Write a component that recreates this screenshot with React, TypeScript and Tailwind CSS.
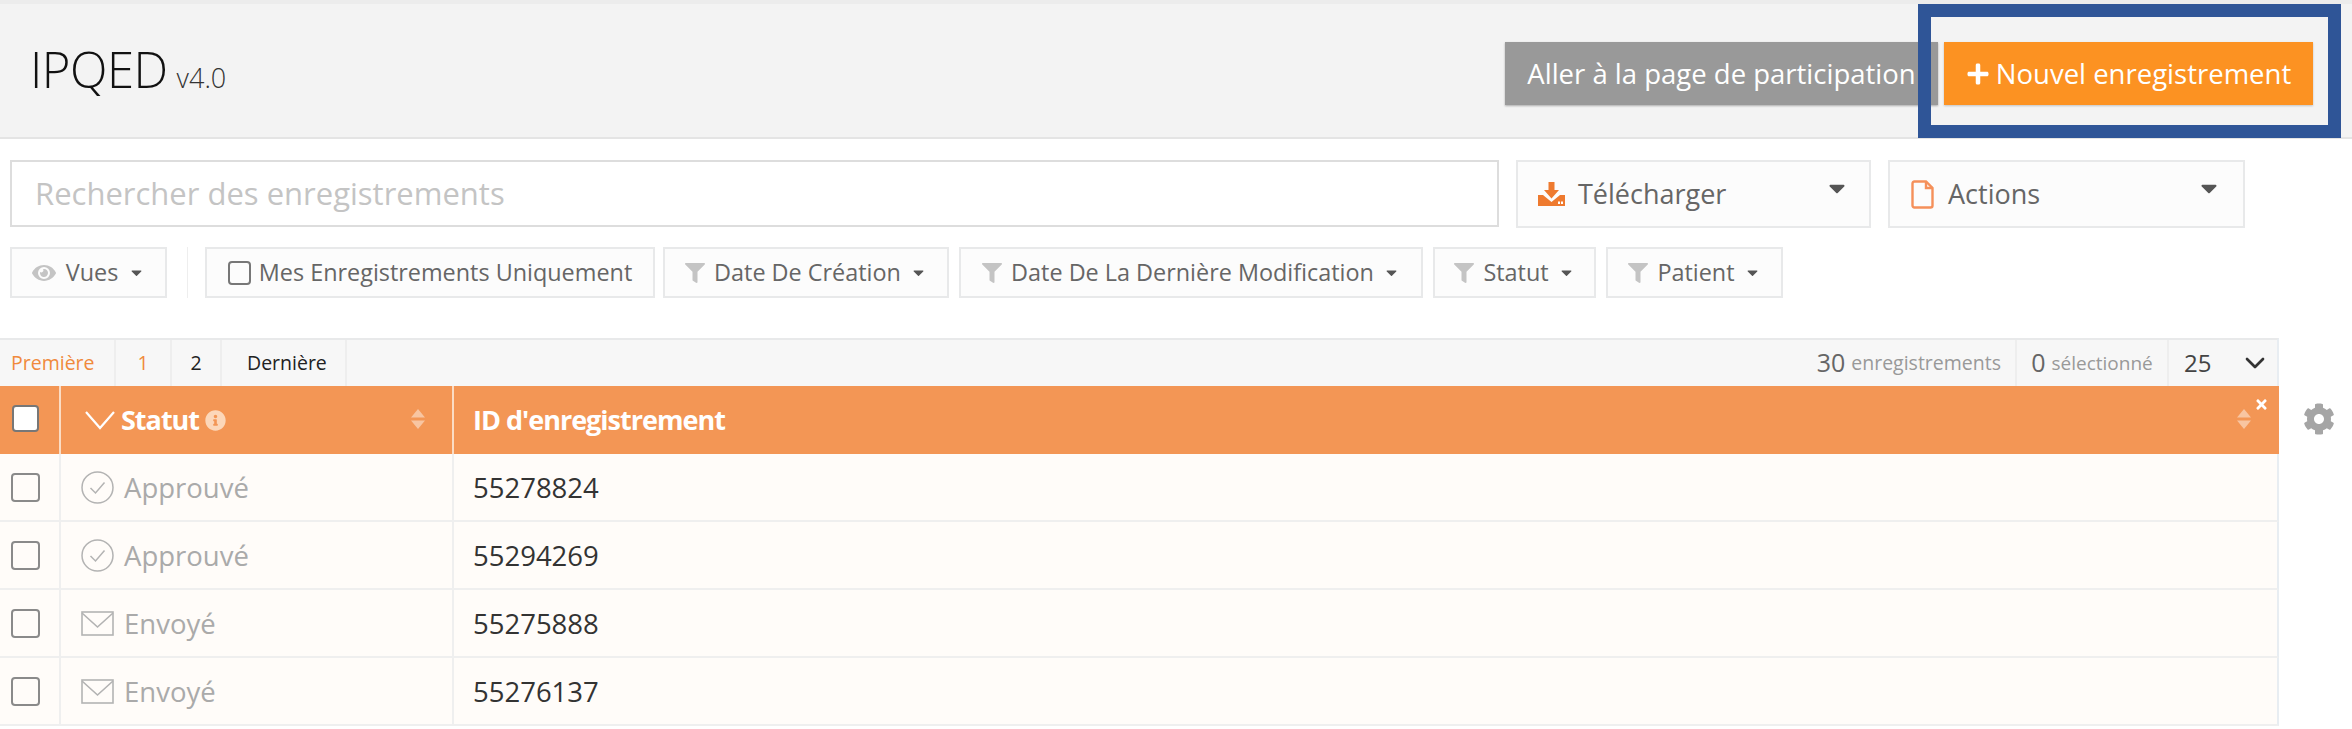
import React from "react";
import { FaEye, FaFilter, FaPlus, FaCog, FaCaretDown, FaInfoCircle, FaTimes } from "react-icons/fa";
import { ChevronDown } from "lucide-react";

function Sort({ className = "" }: { className?: string }) {
  return (
    <svg width="16" height="20" viewBox="0 0 16 20" className={className}>
      <path d="M8 0 L15 8.5 H1 Z" fill="#fff" fillOpacity="0.45" />
      <path d="M8 20 L15 11.5 H1 Z" fill="#fff" fillOpacity="0.45" />
    </svg>
  );
}

function Check() {
  return (
    <svg width="33" height="33" viewBox="0 0 33 33" fill="none" stroke="#b3b3b3" strokeWidth="1.5">
      <circle cx="16.5" cy="16.5" r="15.5" />
      <path d="M9.5 17 L14.5 22 L23.5 11.5" />
    </svg>
  );
}

function Mail() {
  return (
    <svg width="33" height="25" viewBox="0 0 33 25" fill="none" stroke="#b3b3b3" strokeWidth="1.6">
      <rect x="1" y="1" width="31" height="23" />
      <path d="M1 2 L16.5 16 L32 2" />
    </svg>
  );
}

function Filter({ w, label }: { w: string; label: string }) {
  return (
    <div className={`${w} h-[51px] flex items-center justify-center gap-[9px] bg-[#fcfcfc] border-2 border-[#e8e9ea] text-[23.4px] text-[#666]`}>
      <FaFilter className="text-[#c4c4c4] text-[20px]" />
      <span>{label}</span>
      <FaCaretDown className="text-[#555] text-[17px]" />
    </div>
  );
}

const rows = [
  { s: "Approuvé", id: "55278824", icon: <Check /> },
  { s: "Approuvé", id: "55294269", icon: <Check /> },
  { s: "Envoyé", id: "55275888", icon: <Mail /> },
  { s: "Envoyé", id: "55276137", icon: <Mail /> },
];

export default function App() {
  return (
    <div className="relative w-[2352px] h-[729px] overflow-hidden bg-white font-['Open_Sans',sans-serif]">
      <header className="h-[139px] bg-[#f3f3f3] border-t-4 border-t-[#ececec] border-b-2 border-b-[#e4e4e4] flex justify-between pl-[30px] pr-[39px] pt-[38px]">
        <div className="flex items-baseline gap-[9px] text-[#111] h-[63px] mt-[-4px]">
          <span className="text-[49px] leading-[63px] font-light tracking-[-0.5px]">IPQED</span>
          <span className="text-[27px] text-[#333] font-light">v4.0</span>
        </div>
        <div className="flex gap-[6px] h-[63px]">
          <button className="w-[433px] bg-[#999] text-white text-[27.5px] shadow-[0_1px_2px_rgba(0,0,0,0.3)]">Aller à la page de participation</button>
          <button className="w-[369px] bg-[#fc9222] text-white text-[27.5px] flex items-center justify-center gap-[6px] shadow-[0_1px_2px_rgba(0,0,0,0.2)]">
            <FaPlus className="text-[24px]" />
            Nouvel enregistrement
          </button>
        </div>
      </header>

      <div className="absolute left-[1918px] top-[4px] w-[423px] h-[134px] border-[13px] border-[#2f5597]" />

      <div className="flex pl-[10px] pt-[21px] h-[68px] box-content">
        <div className="w-[1489px] h-[67px] border-2 border-[#ddd] flex items-center pl-[23px] text-[31px] text-[#c4c4c4]">
          Rechercher des enregistrements
        </div>
        <div className="ml-[17px] w-[355px] h-[68px] relative border-2 border-[#e8e9ea] bg-[#fcfcfc] flex items-center pl-[20px] gap-[13px] text-[27px] text-[#666]">
          <svg width="27" height="24" viewBox="0 0 27 24" fill="#ee7a2f">
            <path d="M10.5 0 H16.5 V8 H21 L13.5 16.5 L6 8 H10.5 Z" />
            <path d="M0 13 H5 L13.5 20 L22 13 H27 V24 H0 Z" />
            <rect x="20" y="19.5" width="2" height="2.5" fill="#fff" />
            <rect x="23" y="19.5" width="2" height="2.5" fill="#fff" />
          </svg>
          Télécharger
          <FaCaretDown className="absolute right-[19px] top-[13px] text-[#555] text-[26px]" />
        </div>
        <div className="ml-[17px] w-[357px] h-[68px] relative border-2 border-[#e8e9ea] bg-[#fcfcfc] flex items-center pl-[21px] gap-[14px] text-[27px] text-[#666]">
          <svg width="23" height="29" viewBox="0 0 23 29" fill="none" stroke="#f5905a" strokeWidth="2.4">
            <path d="M1.5 3.5 Q1.5 1.5 3.5 1.5 H15 L21.5 8 V25.5 Q21.5 27.5 19.5 27.5 H3.5 Q1.5 27.5 1.5 25.5 Z" />
            <path d="M15 1.5 V8 H21.5" />
          </svg>
          Actions
          <FaCaretDown className="absolute right-[21px] top-[13px] text-[#555] text-[26px]" />
        </div>
      </div>

      <div className="flex items-stretch h-[51px] pl-[10px] mt-[19px]">
        <div className="w-[157px] flex items-center justify-center gap-[10px] bg-[#fcfcfc] border-2 border-[#e8e9ea] text-[23.4px] text-[#666]">
          <FaEye className="text-[#c4c4c4] text-[24px]" />
          <span>Vues</span>
          <FaCaretDown className="text-[#555] text-[17px]" />
        </div>
        <div className="w-px bg-[#eee] ml-[20px] mr-[17px]" />
        <div className="w-[450px] flex items-center justify-center gap-[8px] bg-[#fcfcfc] border-2 border-[#e8e9ea] text-[23.4px] text-[#666]">
          <span className="w-[23px] h-[24px] border-2 border-[#777] rounded-[4px]" />
          <span>Mes Enregistrements Uniquement</span>
        </div>
        <div className="flex gap-[10px] ml-[8px]">
          <Filter w="w-[286px]" label="Date De Création" />
          <Filter w="w-[464px]" label="Date De La Dernière Modification" />
          <Filter w="w-[163px]" label="Statut" />
          <Filter w="w-[177px]" label="Patient" />
        </div>
      </div>

      <div className="flex mt-[40px]">
        <div className="w-[2279px]">
          <div className="h-[48px] bg-[#f7f7f7] border-t-2 border-t-[#e8e9ea] border-r-2 border-r-[#e8edf2] flex items-stretch text-[19.5px]">
            <div className="w-[116px] flex items-center pl-[11px] text-[#f08a3c] border-r-2 border-[#eee]">Première</div>
            <div className="w-[56px] flex items-center justify-center text-[#f08a3c] border-r-2 border-[#eee]">1</div>
            <div className="w-[50px] flex items-center justify-center text-[#222] border-r-2 border-[#eee]">2</div>
            <div className="w-[125px] flex items-center pl-[25px] text-[#222] border-r-2 border-[#eee]">Dernière</div>
            <div className="flex-1" />
            <div className="flex items-center gap-[6px] pr-[14px] border-r-2 border-[#eee] text-[#999] text-[19.5px]">
              <span className="text-[25px] text-[#666]">30</span> enregistrements
            </div>
            <div className="w-[152px] flex items-center justify-center gap-[6px] border-r-2 border-[#eee] text-[#999] text-[19px]">
              <span className="text-[25px] text-[#666]">0</span> sélectionné
            </div>
            <div className="w-[108px] flex items-center justify-between pl-[15px] pr-[6px] text-[24px] text-[#444]">
              25
              <ChevronDown size={32} strokeWidth={2} className="text-[#333]" />
            </div>
          </div>

          <div className="h-[68px] bg-[#f39655] flex items-stretch text-white text-[27px] font-bold">
            <div className="w-[61px] flex items-center pl-[12px] border-r-2 border-[#fbdcc4]">
              <span className="w-[27px] h-[27px] bg-white rounded-[4px] border-2 border-[#777] mt-[-4px]" />
            </div>
            <div className="w-[393px] relative flex items-center pl-[24px] gap-[6px] border-r-2 border-[#fbdcc4]">
              <svg width="30" height="20" viewBox="0 0 30 20" fill="none" stroke="#fff" strokeWidth="2.2"><path d="M1 2 L15 18 L29 2" /></svg>
              <span className="tracking-[-1px] mt-[1px]">Statut</span>
              <FaInfoCircle className="text-[#fcd7b9] text-[21px]" />
              <Sort className="absolute right-[26px] top-[23px]" />
            </div>
            <div className="flex-1 relative flex items-center pl-[19px]">
              <span className="tracking-[-1px] mt-[1px]">ID d'enregistrement</span>
              <Sort className="absolute right-[27px] top-[23px]" />
              <FaTimes className="absolute right-[10px] top-[11px] text-[15px]" />
            </div>
          </div>

          {rows.map((r) => (
            <div key={r.id} className="h-[68px] bg-[#fffcf9] border-b-2 border-[#efefef] border-r-2 border-r-[#e8edf2] flex items-stretch">
              <div className="w-[61px] flex items-center pl-[11px] border-r-2 border-[#efefef]">
                <span className="w-[29px] h-[29px] rounded-[4px] border-2 border-[#8a8a8a]" />
              </div>
              <div className="w-[393px] flex items-center pl-[20px] gap-[10px] text-[27.5px] text-[#aaa] border-r-2 border-[#efefef]">
                {r.icon}
                <span className="mt-[1px]">{r.s}</span>
              </div>
              <div className="flex-1 flex items-center pl-[19px] text-[27.5px] text-[#333]"><span className="mt-[1px]">{r.id}</span></div>
            </div>
          ))}
        </div>
        <div className="pl-[24px] pt-[65px]">
          <FaCog className="text-[#a5a5a5] text-[32px]" />
        </div>
      </div>
    </div>
  );
}
